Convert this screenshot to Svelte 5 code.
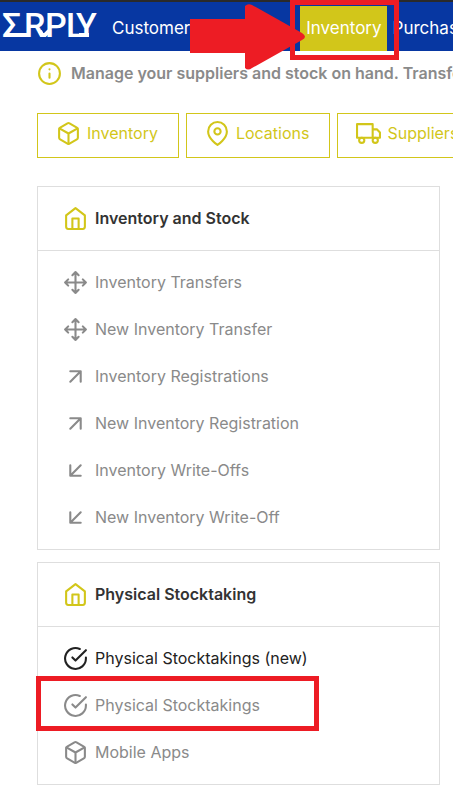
<script lang="ts">
    type Row = { label: string; icon: string; active?: boolean; framed?: boolean };

    const tabs: Row[] = [
        { label: "Inventory", icon: "box" },
        { label: "Locations", icon: "pin" },
        { label: "Suppliers", icon: "truck" },
    ];

    const stock: Row[] = [
        { label: "Inventory Transfers", icon: "move" },
        { label: "New Inventory Transfer", icon: "move" },
        { label: "Inventory Registrations", icon: "up" },
        { label: "New Inventory Registration", icon: "up" },
        { label: "Inventory Write-Offs", icon: "down" },
        { label: "New Inventory Write-Off", icon: "down" },
    ];

    const stocktaking: Row[] = [
        { label: "Physical Stocktakings (new)", icon: "check", active: true },
        { label: "Physical Stocktakings", icon: "check", framed: true },
        { label: "Mobile Apps", icon: "box" },
    ];

    const cards = [
        { title: "Inventory and Stock", rows: stock },
        { title: "Physical Stocktaking", rows: stocktaking },
    ];
</script>

{#snippet icon(name: string)}
    <svg class="icon" viewBox="0 0 24 24" aria-hidden="true">
        {#if name === "box"}
            <path d="M21 16V8a2 2 0 0 0-1-1.73l-7-4a2 2 0 0 0-2 0l-7 4A2 2 0 0 0 3 8v8a2 2 0 0 0 1 1.73l7 4a2 2 0 0 0 2 0l7-4A2 2 0 0 0 21 16z" />
            <path d="M3.3 7 12 12l8.7-5M12 22V12" />
        {:else if name === "pin"}
            <path d="M21 10c0 7-9 13-9 13s-9-6-9-13a9 9 0 0 1 18 0z" />
            <circle cx="12" cy="10" r="3" />
        {:else if name === "truck"}
            <path d="M1 3h15v13H1zM16 8h4l3 3v5h-7z" />
            <circle cx="5.5" cy="18.5" r="2.5" />
            <circle cx="18.5" cy="18.5" r="2.5" />
        {:else if name === "move"}
            <path d="M5 9l-3 3 3 3M9 5l3-3 3 3M15 19l-3 3-3-3M19 9l3 3-3 3M2 12h20M12 2v20" />
        {:else if name === "up"}
            <path d="M7 17L17 7M7 7h10v10" />
        {:else if name === "down"}
            <path d="M17 7L7 17M17 17H7V7" />
        {:else if name === "check"}
            <path d="M22 11.1V12a10 10 0 1 1-5.9-9.1" />
            <path d="M22 4L12 14l-3-3" />
        {:else if name === "home"}
            <path d="M3 9l9-7 9 7v11a2 2 0 0 1-2 2H5a2 2 0 0 1-2-2z" />
            <path d="M9 22V12h6v10" />
        {:else if name === "info"}
            <circle cx="12" cy="12" r="10" />
            <path d="M12 16v-4M12 8h.01" />
        {/if}
    </svg>
{/snippet}

<div class="page">
    <header>
        <a class="logo" href="#home">
            <svg viewBox="0 0 96 32" width="96" height="32">
                <text x="-1 21 42 63 73" y="28">ΣRPLY</text>
                <path d="M2 26H25M37 22l2 4h3l4-4M76 26h10" />
            </svg>
        </a>
        <nav>
            <a href="#customers">Customers</a>
            <a class="current" href="#inventory">
                Inventory
                <span class="frame"></span>
                <svg class="arrow" viewBox="0 0 116 66" aria-hidden="true">
                    <path d="M0 15H55V2Q58 -1 62 1L112 29Q118 33 112 36L62 64Q58 67 55 64V49H0z" />
                </svg>
            </a>
            <a href="#purchase">Purchase</a>
        </nav>
    </header>

    <main>
        <p class="intro">
            {@render icon("info")}
            <span>Manage your suppliers and stock on hand. Transfer</span>
        </p>

        <div class="tabs">
            {#each tabs as tab}
                <a href="#{tab.icon}">{@render icon(tab.icon)}{tab.label}</a>
            {/each}
        </div>

        {#each cards as card}
            <section>
                <h2>{@render icon("home")}{card.title}</h2>
                <ul>
                    {#each card.rows as row}
                        <li>
                            <a href="#{row.icon}" class:active={row.active}>
                                {@render icon(row.icon)}{row.label}
                                {#if row.framed}
                                    <span class="frame"></span>
                                {/if}
                            </a>
                        </li>
                    {/each}
                </ul>
            </section>
        {/each}
    </main>
</div>

<style>
    :global(body) {
        background: #fff;
    }
    .page {
        font-family: Inter, "Liberation Sans", sans-serif;
        font-size: 16px;
        line-height: 25px;
        color: #8a8a8a;
        overflow: hidden;
    }
    a {
        color: inherit;
        text-decoration: none;
    }
    .icon {
        flex: none;
        width: 25px;
        height: 25px;
        fill: none;
        stroke: currentColor;
        stroke-width: 2;
        stroke-linecap: round;
        stroke-linejoin: round;
    }
    header {
        display: flex;
        height: 45px;
        padding-top: 4px;
        border-top: 2px solid #2a2a2a;
        background: #0737a2;
        color: #fff;
    }
    .logo {
        flex: none;
        width: 103px;
        padding: 3px 0 0 3px;
    }
    .logo svg {
        display: block;
        overflow: visible;
    }
    .logo text {
        fill: #fff;
        font-family: Roboto, "Liberation Sans", sans-serif;
        font-size: 34px;
        font-weight: 500;
    }
    .logo path {
        fill: none;
        stroke: #fff;
        stroke-width: 4;
    }
    nav {
        display: flex;
        font-size: 17px;
        line-height: 44px;
    }
    nav a {
        padding: 0 5px 0 6px;
    }
    .current {
        position: relative;
        margin-left: 96px;
        background: #d2c61a;
    }
    .frame {
        position: absolute;
        border: 5px solid #ed1c24;
    }
    .current .frame {
        inset: -6px -12px -9px -10px;
    }
    .arrow {
        position: absolute;
        right: 81px;
        top: -2px;
        width: 116px;
        height: 66px;
        fill: #ed1c24;
    }
    main {
        padding: 10px 13px 8px 37px;
    }
    .intro {
        display: flex;
        gap: 9px;
        margin: 0 0 27px;
        font-weight: 600;
        white-space: nowrap;
    }
    .intro .icon,
    h2 .icon {
        color: #d2c61a;
    }
    .tabs {
        display: flex;
        gap: 7px;
        margin-bottom: 28px;
    }
    .tabs a {
        display: flex;
        flex: none;
        gap: 6px;
        padding: 7px 20px 11px 18px;
        border: 1px solid #d2c61a;
        color: #d2c61a;
    }
    section {
        margin-bottom: 12px;
        border: 1px solid #dedede;
    }
    h2 {
        display: flex;
        align-items: center;
        gap: 7px;
        height: 63px;
        margin: 0;
        padding-left: 25px;
        border-bottom: 1px solid #dedede;
        color: #333;
        font-size: 16px;
        font-weight: 600;
    }
    ul {
        margin: 0;
        padding: 8px 0;
        list-style: none;
    }
    li a {
        position: relative;
        display: flex;
        align-items: center;
        gap: 7px;
        padding: 11px 25px;
    }
    li .frame {
        top: -6px;
        bottom: -2px;
        left: -2px;
        width: 273px;
    }
    .active {
        color: #222;
    }
</style>
